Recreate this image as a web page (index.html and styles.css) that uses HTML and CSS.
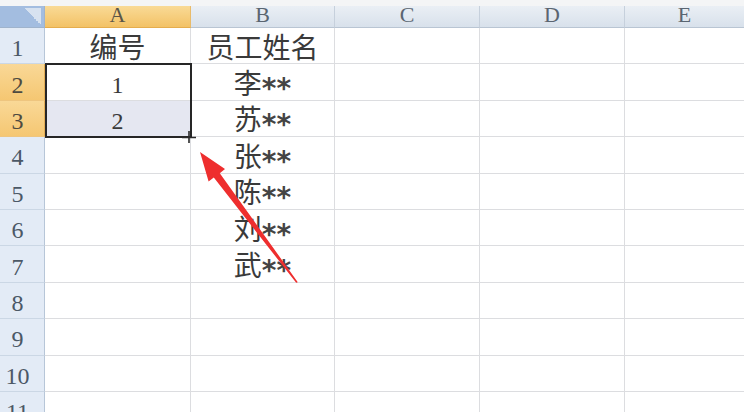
FILE: index.html
```html
<!DOCTYPE html>
<html lang="zh-CN">
<head>
<meta charset="utf-8">
<title>Sheet</title>
<link rel="stylesheet" href="styles.css">
</head>
<body>
<div class="strip"></div>
<div class="sheet">
  <div class="corner"></div>
  <div class="ch on">A</div>
  <div class="ch">B</div>
  <div class="ch">C</div>
  <div class="ch">D</div>
  <div class="ch last">E</div>

  <div class="rh">1</div>
  <div class="c txt">编号</div>
  <div class="c txt">员工姓名</div>
  <div class="c"></div><div class="c"></div><div class="c last"></div>

  <div class="rh on">2</div>
  <div class="c num">1</div>
  <div class="c txt">李<span class="ast">**</span></div>
  <div class="c"></div><div class="c"></div><div class="c last"></div>

  <div class="rh on">3</div>
  <div class="c num fill">2</div>
  <div class="c txt">苏<span class="ast">**</span></div>
  <div class="c"></div><div class="c"></div><div class="c last"></div>

  <div class="rh">4</div>
  <div class="c"></div>
  <div class="c txt">张<span class="ast">**</span></div>
  <div class="c"></div><div class="c"></div><div class="c last"></div>

  <div class="rh">5</div>
  <div class="c"></div>
  <div class="c txt">陈<span class="ast">**</span></div>
  <div class="c"></div><div class="c"></div><div class="c last"></div>

  <div class="rh">6</div>
  <div class="c"></div>
  <div class="c txt">刘<span class="ast">**</span></div>
  <div class="c"></div><div class="c"></div><div class="c last"></div>

  <div class="rh">7</div>
  <div class="c"></div>
  <div class="c txt">武<span class="ast">**</span></div>
  <div class="c"></div><div class="c"></div><div class="c last"></div>

  <div class="rh">8</div>
  <div class="c"></div><div class="c"></div><div class="c"></div><div class="c"></div><div class="c last"></div>

  <div class="rh">9</div>
  <div class="c"></div><div class="c"></div><div class="c"></div><div class="c"></div><div class="c last"></div>

  <div class="rh">10</div>
  <div class="c"></div><div class="c"></div><div class="c"></div><div class="c"></div><div class="c last"></div>

  <div class="rh">11</div>
  <div class="c"></div><div class="c"></div><div class="c"></div><div class="c"></div><div class="c last"></div>

  <div class="sel">
    <svg class="cross" width="14" height="12" viewBox="0 0 14 12"><path d="M0 6.5H14M7 0V12" stroke="#2a2a2a" stroke-width="1.6"/></svg>
  </div>
</div>
<svg class="arrow" width="744" height="412" viewBox="0 0 744 412">
  <polygon points="200,152 225,169 219.8,173.2 297.8,282.2 296.2,282.8 213.8,177.6 208.6,181.6" fill="#ee2e2e"/>
</svg>
</body>
</html>
```

FILE: styles.css
```css
html, body {
  margin: 0;
  padding: 0;
  background: #ffffff;
  overflow: hidden;
}
body {
  position: relative;
  width: 744px;
  height: 412px;
}
.strip {
  height: 6px;
  background: #f4f5f6;
}
.sheet {
  position: relative;
  display: grid;
  grid-template-columns: 45px 146px 144px 145px 145px 1fr;
  grid-template-rows: 22px repeat(11, 36.4px);
}
.sheet > div {
  box-sizing: border-box;
  min-width: 0;
}
.corner {
  background:
    linear-gradient(45deg, transparent 50%, #d7e2f0 50%) right 3px top 2px / 17px 17px no-repeat,
    #a3bde0;
  border-right: 1px solid #9fb3cc;
  border-bottom: 1px solid #9fb3cc;
}
.ch {
  background: linear-gradient(#eaeff5, #d8e1eb);
  border-right: 1px solid #c6d0dc;
  border-bottom: 1px solid #b9c5d3;
  font-family: "Liberation Serif", serif;
  font-size: 22px;
  line-height: 18px;
  color: #5a6571;
  text-align: center;
}
.ch.on {
  background: linear-gradient(#f9da96, #f3c266);
  border-bottom-color: #e5ad4d;
  border-right-color: #e9bb6a;
  color: #5b5548;
}
.ch.last, .c.last {
  border-right: none;
}
.rh {
  background: #e3ebf6;
  border-right: 1px solid #b7c6d8;
  border-bottom: 1px solid #cbd7e5;
  font-family: "Liberation Serif", serif;
  font-size: 24px;
  line-height: 24px;
  color: #4b5866;
  display: flex;
  align-items: center;
  justify-content: center;
  padding: 5px 9px 0 0;
}
.rh.on {
  background: linear-gradient(#f9d897, #f5c772);
  border-bottom-color: #eec57f;
  border-right-color: #e3ae55;
  color: #4e4a40;
}
.c {
  border-right: 1px solid #dcdde0;
  border-bottom: 1px solid #dcdde0;
  display: flex;
  align-items: center;
  justify-content: center;
  color: #3a3a3a;
}
.c.fill {
  background: #e5e7f1;
}
.txt {
  font-family: "Noto Sans CJK SC", sans-serif;
  font-size: 28px;
  line-height: 28px;
  white-space: nowrap;
}
.ast {
  font-family: "DejaVu Sans", sans-serif;
  font-weight: bold;
  font-size: 28px;
  line-height: 20px;
  position: relative;
  top: 7px;
  color: #444444;
}
.num {
  font-family: "Liberation Serif", serif;
  font-size: 24px;
  line-height: 24px;
  padding-top: 6px;
}
.sheet > .sel {
  position: absolute;
  grid-column: 2 / 3;
  grid-row: 3 / 5;
  top: -1px;
  bottom: -1px;
  left: 0;
  right: -1px;
  border: 2px solid #262626;
}
.cross {
  position: absolute;
  right: -6px;
  bottom: -7px;
}
.arrow {
  position: absolute;
  left: 0;
  top: 0;
  pointer-events: none;
}
```
